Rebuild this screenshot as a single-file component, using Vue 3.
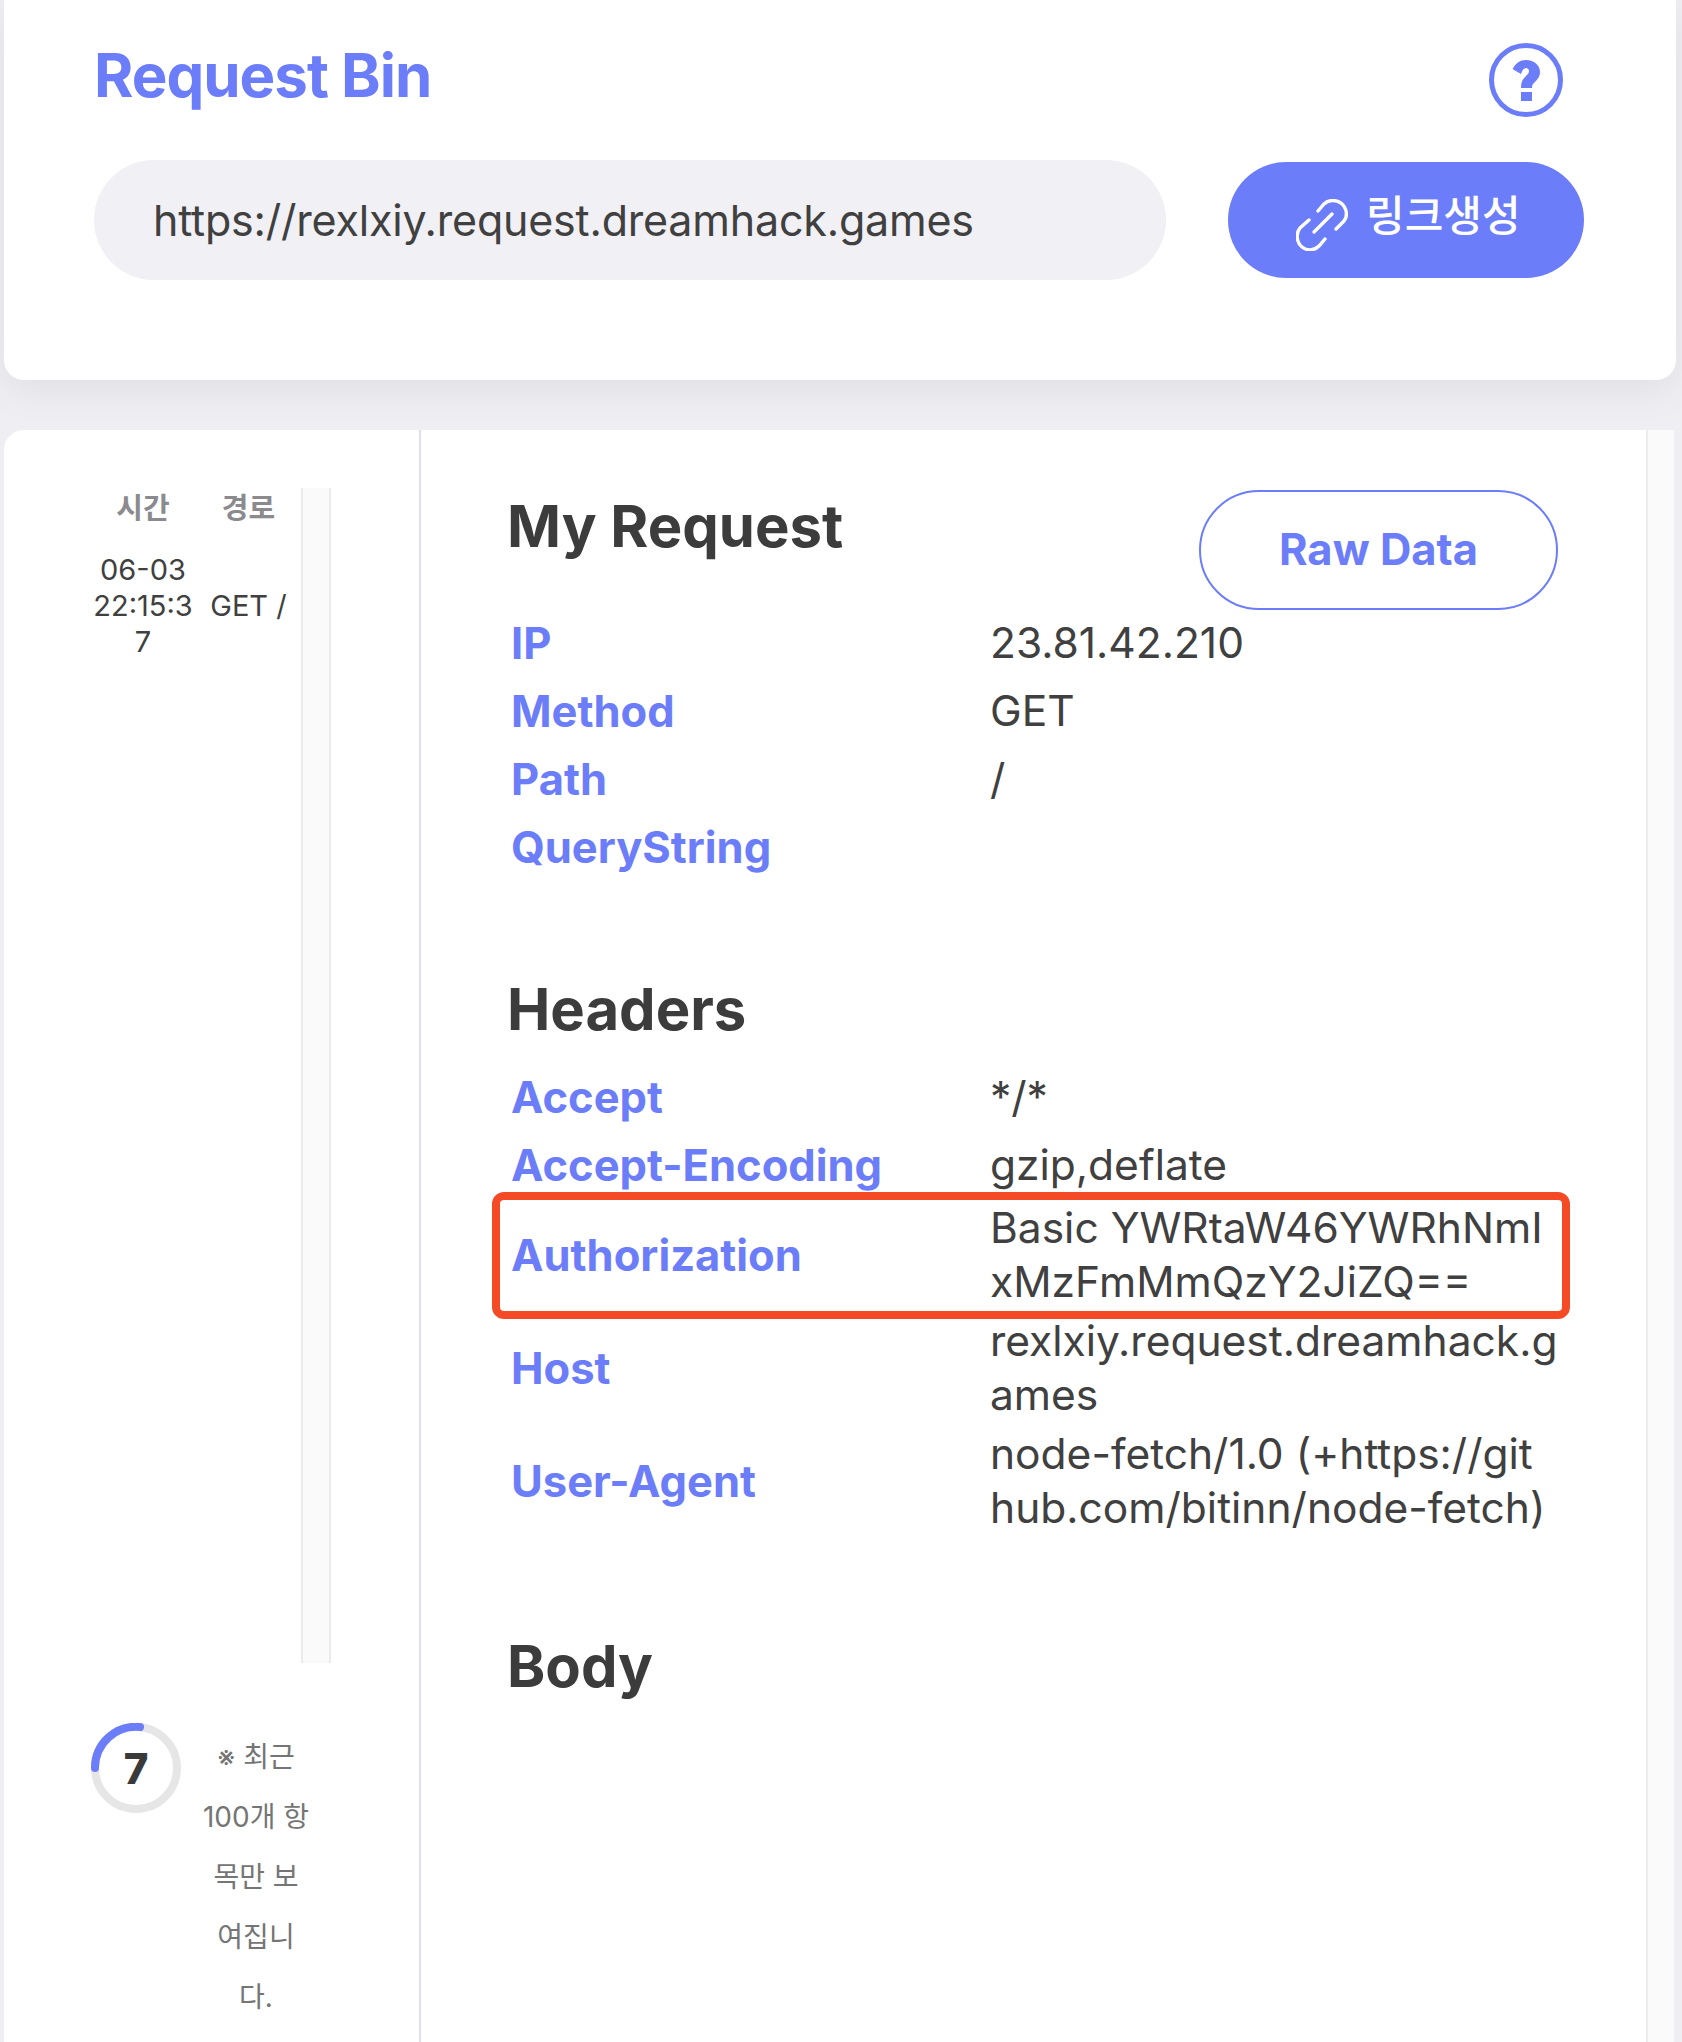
<script setup>
const requestRows = [
  { label: 'IP', value: '23.81.42.210' },
  { label: 'Method', value: 'GET' },
  { label: 'Path', value: '/' },
  { label: 'QueryString', value: '' },
]
const headerRows = [
  { label: 'Accept', value: '*/*' },
  { label: 'Accept-Encoding', value: 'gzip,deflate' },
  { label: 'Authorization', value: 'Basic YWRtaW46YWRhNmI\nxMzFmMmQzY2JiZQ==', marked: true },
  { label: 'Host', value: 'rexlxiy.request.dreamhack.g\names' },
  { label: 'User-Agent', value: 'node-fetch/1.0 (+https://git\nhub.com/bitinn/node-fetch)' },
]
</script>

<template>
  <div class="page">
    <section class="top-card">
      <div class="title-row">
        <h1 class="brand">Request Bin</h1>
        <svg class="help" viewBox="0 0 100 100" aria-hidden="true">
          <circle cx="46" cy="50" r="34.5" fill="none" stroke="#6c7df9" stroke-width="5" />
          <path fill="#6c7df9" d="M32.5 39C36 33 40 30 46 30C54 30 60 35 60 42C60 47 57 50 54 53C52 55 52 56 52 58L41 58C41 53 42 50 45 47C48 44 49 43 49 41C49 39 47 38 46 38C44 38 42 40 41 44Z" />
          <rect x="41" y="62" width="11" height="9" fill="#6c7df9" />
        </svg>
      </div>
      <div class="url-row">
        <div class="url">https://rexlxiy.request.dreamhack.games</div>
        <button class="make-link">
          <svg class="link-icon" viewBox="0 0 52 52" aria-hidden="true">
            <path d="M22 12L28 5C32 1 39 0 45 4C51 9 52 17 48 22L40 30" />
            <path d="M29 40L23 47C18 52 11 52 6 48C0 43 0 34 4 29L13 21" />
            <path d="M18 33L36 15" />
          </svg>
          <span class="make-label">링크생성</span>
        </button>
      </div>
    </section>

    <section class="bottom-card">
      <aside class="side">
        <div class="list-wrap">
          <div class="list">
            <div class="list-head">
              <span>시간</span>
              <span>경로</span>
            </div>
            <div class="list-row">
              <span class="time">06-03 22:15:37</span>
              <span class="route">GET /</span>
            </div>
          </div>
          <div class="track"></div>
        </div>
        <div class="foot">
          <div class="ring">
            <svg viewBox="0 0 90 90" aria-hidden="true">
              <circle cx="45" cy="45" r="41" fill="none" stroke="#e6e6e6" stroke-width="8" />
              <path d="M4 45A41 41 0 0 1 49 4" fill="none" stroke="#6c7df9" stroke-width="8" stroke-linecap="round" />
            </svg>
            <span class="count">7</span>
          </div>
          <p class="note">※ 최근 100개 항목만 보여집니다.</p>
        </div>
      </aside>

      <main class="main">
        <div class="first-head">
          <h2 class="heading">My Request</h2>
          <button class="raw">Raw Data</button>
        </div>
        <div class="rows">
          <div v-for="r in requestRows" :key="r.label" class="row">
            <div class="key">{{ r.label }}</div>
            <div class="val">{{ r.value }}</div>
          </div>
        </div>

        <h2 class="heading headers-title">Headers</h2>
        <div class="rows">
          <div v-for="r in headerRows" :key="r.label" class="row" :class="{ marked: r.marked }">
            <div class="key">{{ r.label }}</div>
            <div class="val">{{ r.value }}</div>
          </div>
        </div>

        <h2 class="heading body-title">Body</h2>
      </main>

      <div class="strip"></div>
    </section>
  </div>
</template>

<style>
html, body { margin: 0; background: #eeeef3; }
</style>

<style scoped>
.page {
  box-sizing: border-box;
  width: 1682px;
  height: 2042px;
  overflow: hidden;
  background: #eeeef3;
  font-family: Inter, "Noto Sans CJK KR", sans-serif;
  color: #404040;
}
.top-card {
  box-sizing: border-box;
  width: 1672px;
  height: 380px;
  margin-left: 4px;
  padding: 0 90px;
  background: #fff;
  border-radius: 0 0 20px 20px;
  box-shadow: 0 10px 40px rgba(0, 0, 0, 0.065);
  position: relative;
}
.title-row {
  display: flex;
  justify-content: space-between;
  align-items: flex-start;
  height: 160px;
}
.brand {
  margin: 39px 0 0;
  font-size: 60px;
  line-height: 72px;
  font-weight: 700;
  letter-spacing: -1px;
  color: #6c7df9;
}
.help {
  width: 100px;
  height: 100px;
  margin: 30px 6px 0 0;
}
.url-row {
  display: flex;
  align-items: center;
  gap: 62px;
}
.url {
  box-sizing: border-box;
  width: 1072px;
  height: 120px;
  padding: 0 59px;
  border-radius: 60px;
  background: #f0f0f5;
  font-size: 43px;
  line-height: 120px;
  letter-spacing: -0.2px;
}
.make-link {
  display: flex;
  align-items: center;
  gap: 18px;
  box-sizing: border-box;
  width: 356px;
  height: 116px;
  padding: 0 0 0 68px;
  border: none;
  border-radius: 58px;
  background: #6c7df9;
  color: #fff;
  font-family: inherit;
}
.link-icon {
  width: 52px;
  height: 52px;
  margin-top: 10px;
  fill: none;
  stroke: #fff;
  stroke-width: 3.4;
  stroke-linecap: round;
}
.make-label {
  font-size: 42px;
  font-weight: 500;
  line-height: 48px;
  margin-top: -8px;
}
.bottom-card {
  display: flex;
  width: 1670px;
  height: 1612px;
  margin: 50px 0 0 4px;
  background: #fff;
  border-radius: 20px 0 0 0;
  position: relative;
}
.side {
  box-sizing: border-box;
  flex: none;
  width: 417px;
  padding: 58px 0 0 86px;
  border-right: 2px solid #e0e0e8;
}
.list-wrap {
  display: flex;
  height: 1175px;
}
.list {
  width: 211px;
}
.list-head {
  display: grid;
  grid-template-columns: 106px 105px;
  height: 64px;
  font-size: 29px;
  font-weight: 700;
  line-height: 42px;
  color: #8a8a8f;
  text-align: center;
}
.list-row {
  display: grid;
  grid-template-columns: 106px 105px;
  align-items: center;
  font-size: 29px;
  line-height: 36px;
  text-align: center;
}
.time {
  padding: 0 3px;
  word-break: break-all;
}
.track {
  box-sizing: border-box;
  width: 30px;
  background: #fafafa;
  border-left: 2px solid #ececec;
  border-right: 2px solid #ececec;
}
.foot {
  display: flex;
  align-items: flex-start;
  margin-top: 60px;
}
.ring {
  flex: none;
  position: relative;
  width: 90px;
  height: 90px;
  margin-left: 1px;
}
.ring svg {
  display: block;
  width: 90px;
  height: 90px;
}
.count {
  position: absolute;
  inset: 0;
  text-align: center;
  font-size: 42px;
  font-weight: 800;
  line-height: 92px;
  color: #3a3a3a;
}
.note {
  width: 109px;
  margin: 4px 0 0 20.5px;
  font-size: 28px;
  line-height: 60px;
  color: #757575;
  text-align: center;
}
.main {
  box-sizing: border-box;
  flex: none;
  width: 1225px;
  padding: 0 88px 0 86px;
}
.first-head {
  display: flex;
  justify-content: space-between;
  align-items: flex-start;
  height: 179px;
}
.heading {
  margin: 0;
  font-size: 58px;
  line-height: 72px;
  font-weight: 700;
  color: #3c3c3c;
}
.first-head .heading {
  margin-top: 60px;
}
.raw {
  width: 359px;
  height: 120px;
  margin-top: 60px;
  padding: 0 0 2px;
  border: 2px solid #6c7df9;
  border-radius: 60px;
  background: #fff;
  color: #6c7df9;
  font-family: inherit;
  font-size: 43.5px;
  font-weight: 700;
}
.row {
  display: flex;
  align-items: center;
  min-height: 68px;
  padding: 2px 0 3px;
  box-sizing: border-box;
  position: relative;
}
.key {
  flex: none;
  width: 483px;
  padding-left: 4px;
  box-sizing: border-box;
  font-size: 43.5px;
  font-weight: 700;
  color: #6c7df9;
}
.val {
  flex: none;
  width: 580px;
  font-size: 42.5px;
  line-height: 54px;
  white-space: pre-line;
}
.marked::after {
  content: "";
  position: absolute;
  left: -15px;
  top: -7px;
  width: 1078px;
  height: 127px;
  box-sizing: border-box;
  border: 8px solid #f44b26;
  border-radius: 12px;
  pointer-events: none;
}
.headers-title {
  margin-top: 92px;
  margin-bottom: 18px;
}
.body-title {
  margin-top: 92px;
}
.strip {
  flex: none;
  box-sizing: border-box;
  width: 28px;
  background: #fafafa;
  border-left: 2px solid #ececec;
}
</style>
